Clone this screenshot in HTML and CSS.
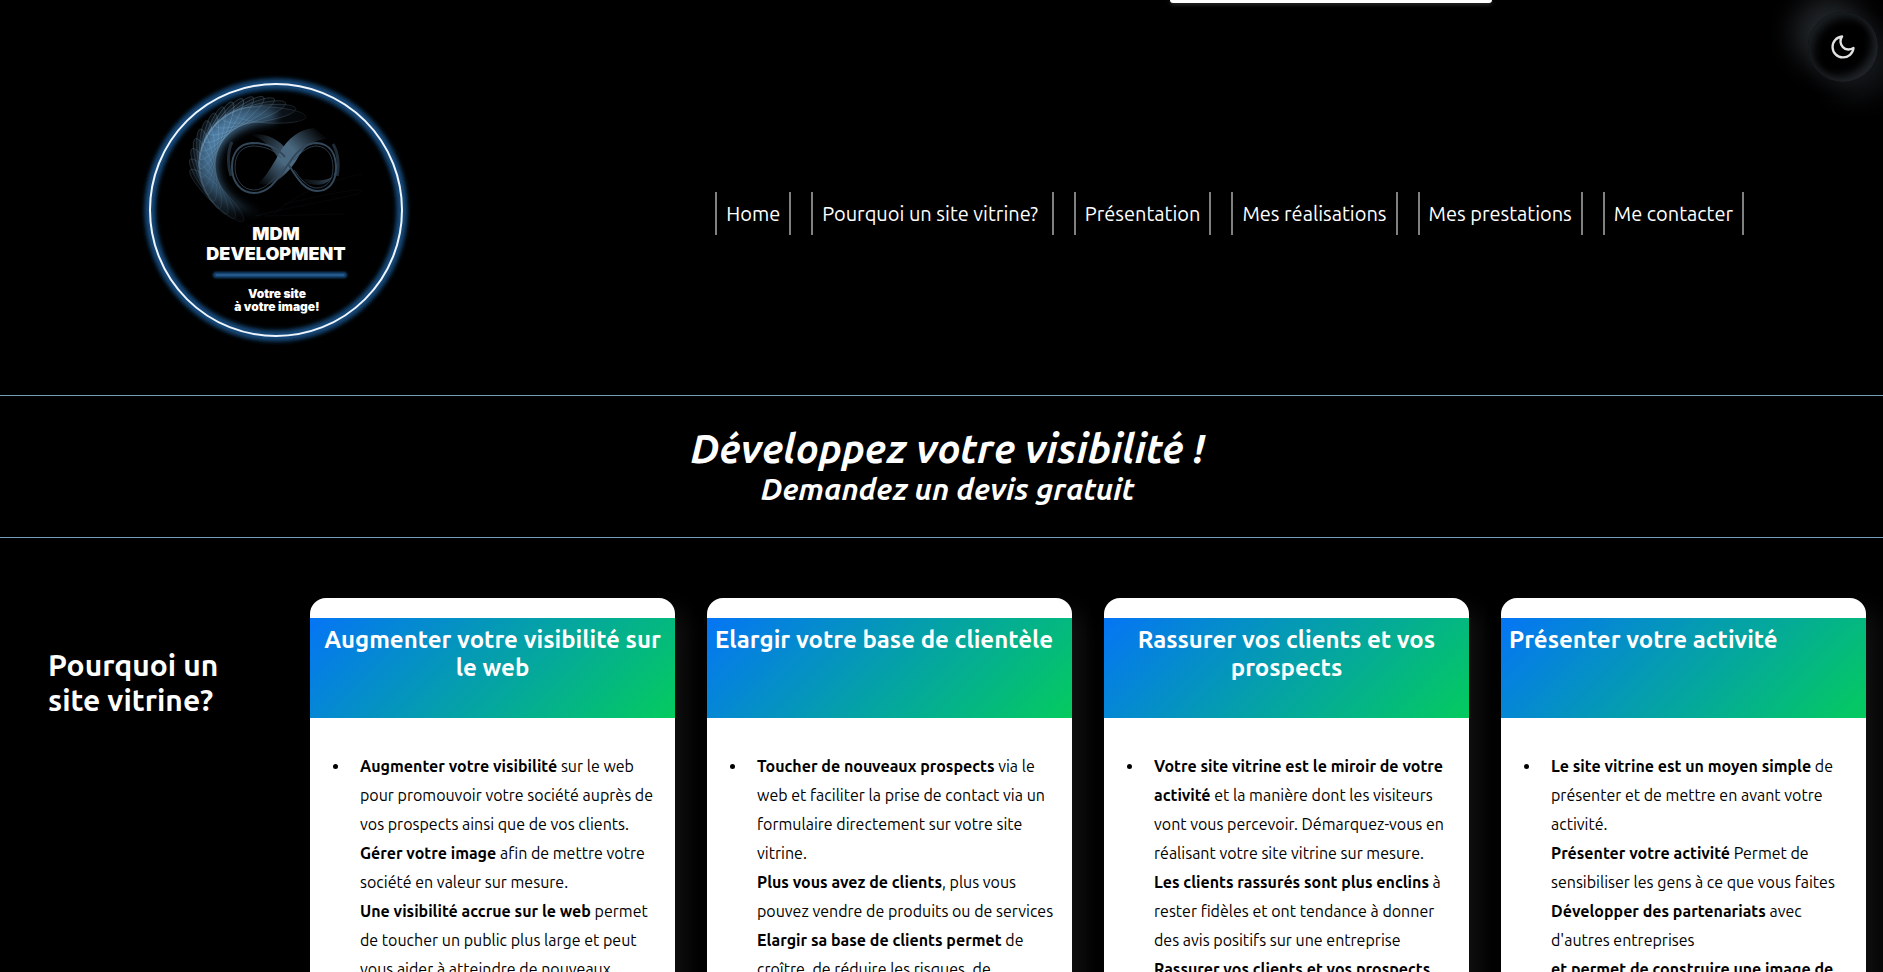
FILE: index.html
```html
<!DOCTYPE html>
<html lang="fr">
<head>
<meta charset="utf-8">
<title>MDM Development</title>
<link rel="stylesheet" href="styles.css">
</head>
<body>
<div class="notice" aria-hidden="true"></div>
<button class="theme-toggle" type="button" aria-label="Changer de thème">
  <svg viewBox="0 0 24 24" width="28" height="28"><path d="M21 12.79A9 9 0 1 1 11.21 3 7 7 0 0 0 21 12.79z"/></svg>
</button>
<header class="site-header">
  <a class="logo" href="#" aria-label="MDM Development">
    <svg viewBox="0 0 264 271" width="264" height="271">
      <defs>
        <filter id="glow" x="-20%" y="-20%" width="140%" height="140%"><feGaussianBlur stdDeviation="2"/></filter>
        <filter id="barglow" x="-10%" y="-200%" width="120%" height="500%"><feGaussianBlur stdDeviation="1"/></filter>
        <filter id="soft" x="-30%" y="-30%" width="160%" height="160%"><feGaussianBlur stdDeviation="4"/></filter>
        <radialGradient id="fade" gradientUnits="userSpaceOnUse" cx="68" cy="54" r="104">
          <stop offset="0" stop-color="#fff"/><stop offset=".35" stop-color="#ccc"/><stop offset=".75" stop-color="#888"/><stop offset="1" stop-color="#222"/>
        </radialGradient>
        <mask id="fademask" maskUnits="userSpaceOnUse" x="0" y="0" width="264" height="271"><rect width="264" height="271" fill="url(#fade)"/></mask>
        <linearGradient id="band" gradientUnits="userSpaceOnUse" x1="116" y1="108" x2="174" y2="50">
          <stop offset="0" stop-color="#4a6880" stop-opacity="0"/><stop offset=".4" stop-color="#4a6880"/><stop offset=".6" stop-color="#4a6880"/><stop offset="1" stop-color="#4a6880" stop-opacity="0"/>
        </linearGradient>
        <linearGradient id="wingl" gradientUnits="userSpaceOnUse" x1="140" y1="74" x2="108" y2="56">
          <stop offset="0" stop-color="#4a6880" stop-opacity=".8"/><stop offset="1" stop-color="#4a6880" stop-opacity="0"/>
        </linearGradient>
        <linearGradient id="wingr" gradientUnits="userSpaceOnUse" x1="192" y1="92" x2="156" y2="104">
          <stop offset="0" stop-color="#4a6880" stop-opacity=".8"/><stop offset="1" stop-color="#4a6880" stop-opacity="0"/>
        </linearGradient>
        <g id="petal"><ellipse cx="125" cy="37" rx="37" ry="8" transform="rotate(3 125 37)"/></g>
      </defs>
      <circle cx="132" cy="132" r="126" fill="none" stroke="#174a7a" stroke-width="11" filter="url(#glow)"/>
      <circle cx="132" cy="132" r="126" fill="none" stroke="#eef5fc" stroke-width="2"/>
      <g mask="url(#fademask)">
        <path d="M132 32C100 24 66 40 58 78C56 106 76 132 118 137C92 126 74 112 73 88C74 60 98 47 132 44z" fill="#5f9ac8" opacity=".7" filter="url(#soft)"/>
        <g fill="#6fa8d4" fill-opacity=".1" stroke="#9cc8ea" stroke-opacity=".5" stroke-width=".6">
          <use href="#petal"/>
          <use href="#petal" transform="rotate(-11 114 87)"/>
          <use href="#petal" transform="rotate(-21 114 87)"/>
          <use href="#petal" transform="rotate(-31 114 87)"/>
          <use href="#petal" transform="rotate(-40 114 87)"/>
          <use href="#petal" transform="rotate(-49 114 87)"/>
          <use href="#petal" transform="rotate(-58 114 87)"/>
          <use href="#petal" transform="rotate(-67 114 87)"/>
        </g>
        <g fill="#6fa8d4" fill-opacity=".1" stroke="#9cc8ea" stroke-opacity=".35" stroke-width=".6">
          <use href="#petal" transform="rotate(-76 114 87)"/>
          <use href="#petal" transform="rotate(-85 114 87)"/>
          <use href="#petal" transform="rotate(-94 114 87)"/>
          <use href="#petal" transform="rotate(-103 114 87)"/>
          <use href="#petal" transform="rotate(-112 114 87)"/>
          <use href="#petal" transform="rotate(-121 114 87)"/>
          <use href="#petal" transform="rotate(-130 114 87)"/>
          <use href="#petal" transform="rotate(-139 114 87)"/>
        </g>
        <g fill="none" stroke="#5f86a6" stroke-opacity=".5" stroke-width=".7">
          <path d="M112 138C150 128 190 122 214 116Q222 112 212 112C180 116 160 122 140 126"/>
          <path d="M130 136C156 112 190 102 218 96"/>
          <path d="M120 138L200 136"/>
        </g>
      </g>
      <path d="M143 72C134 60 120 54 104 57C114 58 126 66 134 80z" fill="url(#wingl)"/>
      <path d="M193 84C196 104 176 106 148 98C160 106 190 118 193 84z" fill="url(#wingr)"/>
      <path d="M114 106C124 96 129 86 136 74C144 60 156 51 170 50L184 61C166 62 158 72 152 83C142 98 128 110 114 106z" fill="url(#band)"/>
      <g fill="none" stroke="#33485a">
        <path stroke-width="2" d="M141 79C131 67 118 65 108 65C94 66 88 76 88 89C88 104 97 115 110 115C126 115 134 100 146 84C155 70 164 65 173 65C186 66 192 76 192 90C192 105 184 113 173 113C160 113 152 98 144 86"/>
        <path stroke-width="1" opacity=".8" d="M137 80C129 70 117 68 108 68C96 69 91 78 91 89C91 102 99 112 110 112C122 112 132 99 140 88M150 82C158 73 165 68 173 68C184 69 189 78 189 90C189 103 182 110 173 110C163 110 156 100 150 92"/>
        <path stroke-width="3" opacity=".6" d="M88 64C84 72 83 86 87 98M189 66C195 76 195 90 193 98"/>
      </g>
      <g class="logo-text">
        <text class="logo-name" x="132" y="162">MDM</text>
        <text class="logo-name" x="132" y="182">DEVELOPMENT</text>
        <text class="logo-tag" x="133" y="220">Votre site</text>
        <text class="logo-tag" x="133" y="233">à votre image!</text>
      </g>
      <rect x="69" y="194" width="134" height="6" rx="3" fill="#174a7a" filter="url(#barglow)"/>
      <rect x="72" y="196" width="128" height="2" fill="#28598c"/>
    </svg>
  </a>
  <nav class="main-nav">
    <a href="#home">Home</a>
    <a href="#pourquoi">Pourquoi un site vitrine?&nbsp;</a>
    <a href="#presentation">Présentation</a>
    <a href="#realisations">Mes réalisations</a>
    <a href="#prestations">Mes prestations</a>
    <a href="#contact">Me contacter</a>
  </nav>
</header>
<section class="hero">
  <h1>Développez votre visibilité !</h1>
  <h2>Demandez un devis gratuit</h2>
</section>
<main class="why" id="pourquoi">
  <h2 class="why-title">Pourquoi un<br>site vitrine?</h2>
  <article class="card">
    <div class="card-head"><h3>Augmenter votre visibilité sur le web</h3></div>
    <ul><li><b>Augmenter votre visibilité</b> sur le web pour promouvoir votre société auprès de vos prospects ainsi que de vos clients.<br><b>Gérer votre image</b> afin de mettre votre société en valeur sur mesure.<br><b>Une visibilité accrue sur le web</b> permet de toucher un public plus large et peut vous aider à atteindre de nouveaux</li></ul>
  </article>
  <article class="card">
    <div class="card-head"><h3>Elargir votre base de clientèle</h3></div>
    <ul><li><b>Toucher de nouveaux prospects</b> via le web et faciliter la prise de contact via un formulaire directement sur votre site vitrine.<br><b>Plus vous avez de clients</b>, plus vous pouvez vendre de produits ou de services<br><b>Elargir sa base de clients permet</b> de croître, de réduire les risques, de</li></ul>
  </article>
  <article class="card">
    <div class="card-head"><h3>Rassurer vos clients et vos prospects</h3></div>
    <ul><li><b>Votre site vitrine est le miroir de votre activité</b> et la manière dont les visiteurs vont vous percevoir. Démarquez-vous en réalisant votre site vitrine sur mesure.<br><b>Les clients rassurés sont plus enclins</b> à rester fidèles et ont tendance à donner des avis positifs sur une entreprise<br><b>Rassurer vos clients et vos prospects</b></li></ul>
  </article>
  <article class="card">
    <div class="card-head"><h3>Présenter votre activité</h3></div>
    <ul><li><b>Le site vitrine est un moyen simple</b> de présenter et de mettre en avant votre activité.<br><b>Présenter votre activité</b> Permet de sensibiliser les gens à ce que vous faites<br><b>Développer des partenariats</b> avec d'autres entreprises<br><b>et permet de construire une image de</b></li></ul>
  </article>
</main>
</body>
</html>
```

FILE: styles.css
```css
* { box-sizing: border-box; }

body {
  margin: 0;
  background: #000;
  color: #fff;
  font-family: Ubuntu, Roboto, sans-serif;
  font-size: 16px;
  overflow-x: hidden;
}

h1, h2, h3, ul { margin: 0; padding: 0; }

.notice {
  position: absolute;
  top: 0;
  right: 391px;
  width: 322px;
  height: 3px;
  background: #fff;
  border-radius: 0 0 3px 3px;
  box-shadow: 0 1px 4px rgba(255, 255, 255, .25);
}

.theme-toggle {
  position: absolute;
  top: 12px;
  right: 5px;
  width: 70px;
  height: 70px;
  padding: 0;
  border: 0;
  border-radius: 50%;
  display: grid;
  place-items: center;
  background: #000;
  box-shadow: -14px -14px 28px #23272b, 14px 14px 28px #15181b,
    inset 5px 5px 10px #1b1f23, inset -5px -5px 10px #23272c;
}

.theme-toggle svg {
  fill: none;
  stroke: #e2e2e2;
  stroke-width: 2;
  stroke-linecap: round;
  stroke-linejoin: round;
}

.site-header {
  display: flex;
  align-items: center;
  justify-content: space-between;
  padding: 78px 139px 46px 144px;
  border-bottom: 1px solid #769fba;
}

.logo, .logo svg {
  display: block;
  overflow: visible;
}

.logo-text {
  fill: #fff;
  font-family: Inter, sans-serif;
  font-weight: 900;
  text-anchor: middle;
}

.logo-name { font-size: 18px; }
.logo-tag { font-size: 12px; }

.main-nav { display: flex; gap: 20px; }

.main-nav a {
  padding: 0 9px;
  border: solid #808080;
  border-width: 0 2px;
  color: #fff;
  font-size: 20px;
  line-height: 43px;
  text-decoration: none;
  white-space: nowrap;
}

.hero {
  padding: 30px 0 30px 12px;
  border-bottom: 1px solid #769fba;
  font-style: italic;
  text-align: center;
}

.hero h1 { font-size: 40px; line-height: 46px; }
.hero h2 { font-size: 30px; line-height: 35px; }

.why {
  display: grid;
  grid-template-columns: 230px repeat(4, 1fr);
  gap: 32px;
  padding: 60px 17px 40px 48px;
}

.why-title {
  padding-top: 50px;
  font-size: 30px;
  line-height: 35px;
}

.card {
  min-height: 600px;
  padding-top: 20px;
  border-radius: 16px;
  background: #fff;
  color: #000;
  box-shadow: 12px 12px 24px #111;
}

.card-head {
  display: flex;
  height: 100px;
  padding: 8px;
  background: linear-gradient(135deg, #0575f5, #04cb5e);
  color: #fff;
}

.card-head h3 {
  font-size: 24px;
  line-height: 28px;
  text-align: center;
}

.card ul { padding: 34px 10px 0 40px; }
.card li { padding-left: 10px; line-height: 29px; }
```
